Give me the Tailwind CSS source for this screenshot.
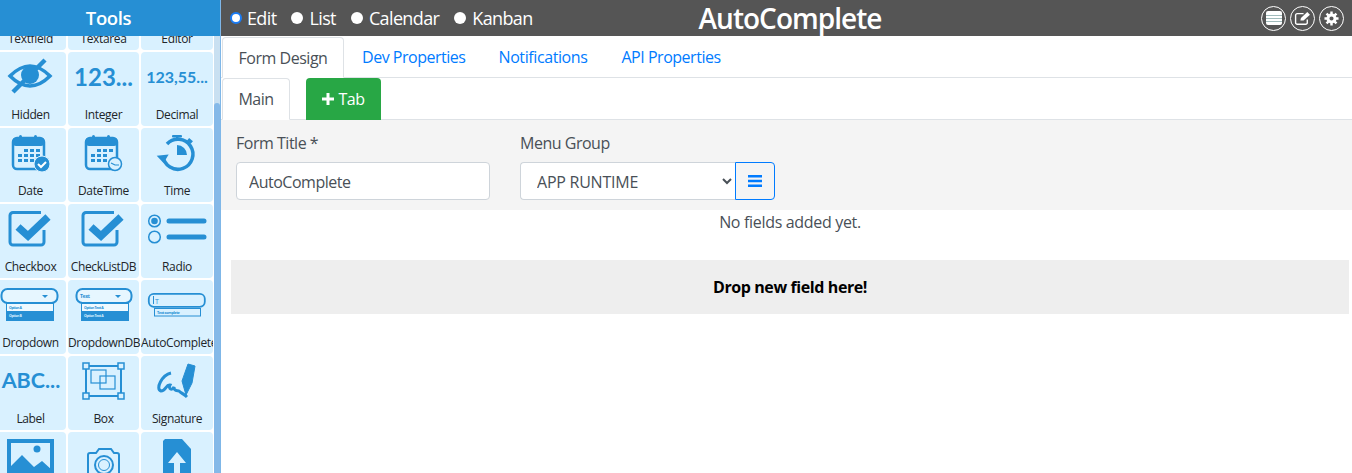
<!DOCTYPE html>
<html lang="en"><head><meta charset="utf-8"><title>AutoComplete</title>
<script src="https://cdn.jsdelivr.net/npm/@tailwindcss/browser@4"></script></head>
<body class="h-[473px] w-[1352px] overflow-hidden bg-white font-['Open_Sans',sans-serif] text-[#495057]">
<div class="flex h-[473px]">
<aside class="flex h-full w-[221px] shrink-0 flex-col border-r border-[#7fb7e8]">
<div class="relative z-10 h-9 bg-[#268fd4] pr-[3px] text-center text-[18.5px] leading-9 font-semibold tracking-[-0.02em] text-white">Tools</div>
<div class="flex min-h-0 flex-1">
<div class="min-w-0 flex-1 overflow-hidden">
<div class="-mt-[60px] -ml-[5px] grid w-[219px] grid-cols-[71px_71px_72px] gap-[2px] text-center text-[12px] tracking-[-0.03em] text-[#212529]">

<div class="h-[74px] rounded bg-[#d9f1ff]"><div class="h-[55px]"></div><div class="whitespace-nowrap leading-4">Textfield</div></div>
<div class="h-[74px] rounded bg-[#d9f1ff]"><div class="h-[55px]"></div><div class="whitespace-nowrap leading-4">Textarea</div></div>
<div class="h-[74px] rounded bg-[#d9f1ff]"><div class="h-[55px]"></div><div class="whitespace-nowrap leading-4">Editor</div></div>

<div class="h-[74px] rounded bg-[#d9f1ff]"><svg viewBox="0 0 71 54" class="h-[54px] w-full" fill="none" stroke="#268fd4"><path d="M15 24Q35 4 55 24Q35 44 15 24Z" stroke-width="3.5"/><circle cx="35" cy="23" r="9" fill="#268fd4" stroke="none"/><path d="M50 8L18 40" stroke-width="4.5"/></svg><div class="mt-[1px] whitespace-nowrap leading-4">Hidden</div></div>
<div class="h-[74px] overflow-hidden rounded bg-[#d9f1ff]"><div class="flex h-[55px] items-center justify-center pb-[5px] text-[24px] font-bold tracking-normal text-[#268fd4] font-['Lato',sans-serif]">123...</div><div class="whitespace-nowrap leading-4">Integer</div></div>
<div class="h-[74px] overflow-hidden rounded bg-[#d9f1ff]"><div class="flex h-[55px] items-center justify-center pb-[5px] text-[16px] font-bold tracking-normal text-[#268fd4] font-['Lato',sans-serif]">123,55...</div><div class="whitespace-nowrap leading-4">Decimal</div></div>

<div class="h-[74px] rounded bg-[#d9f1ff]"><svg viewBox="0 0 71 54" class="h-[54px] w-full" fill="#268fd4"><rect x="18" y="10" width="31" height="31" rx="4" fill="none" stroke="#268fd4" stroke-width="2.5"/><rect x="18" y="10" width="31" height="8" rx="3"/><rect x="24" y="7" width="3" height="7" rx="1.5"/><rect x="39" y="7" width="3" height="7" rx="1.5"/><path d="M29 21h4v3h-4zM35 21h4v3h-4zM41 21h4v3h-4zM23 26h4v3h-4zM29 26h4v3h-4zM35 26h4v3h-4zM41 26h4v3h-4zM23 31h4v3h-4zM29 31h4v3h-4zM35 31h4v3h-4z"/><circle cx="47" cy="36" r="8" stroke="#d9f1ff" stroke-width="1"/><path d="M43 36l3 3 5-5" fill="none" stroke="#fff" stroke-width="2"/></svg><div class="mt-[1px] whitespace-nowrap leading-4">Date</div></div>
<div class="h-[74px] rounded bg-[#d9f1ff]"><svg viewBox="0 0 71 54" class="h-[54px] w-full" fill="#268fd4"><rect x="18" y="10" width="31" height="31" rx="4" fill="none" stroke="#268fd4" stroke-width="2.5"/><rect x="18" y="10" width="31" height="8" rx="3"/><rect x="24" y="7" width="3" height="7" rx="1.5"/><rect x="39" y="7" width="3" height="7" rx="1.5"/><path d="M29 21h4v3h-4zM35 21h4v3h-4zM41 21h4v3h-4zM23 26h4v3h-4zM29 26h4v3h-4zM35 26h4v3h-4zM23 31h4v3h-4zM29 31h4v3h-4zM35 31h4v3h-4z"/><circle cx="47" cy="36" r="6.5" fill="#d9f1ff" stroke="#268fd4" stroke-width="1.5"/><path d="M43 35l4 2 4 0" fill="none" stroke="#268fd4" stroke-width="1.2"/></svg><div class="mt-[1px] whitespace-nowrap leading-4">DateTime</div></div>
<div class="h-[74px] rounded bg-[#d9f1ff]"><svg viewBox="0 0 72 54" class="h-[54px] w-full" fill="#268fd4"><path d="M26 16A15 15 0 1 1 22 28" fill="none" stroke="#268fd4" stroke-width="3.5"/><path d="M16 27h12l-6 8z" transform="rotate(-6 22 30)"/><rect x="31" y="7" width="10" height="2.5" rx="1"/><rect x="35" y="8" width="2.5" height="5"/><rect x="47" y="11" width="5" height="3.5" transform="rotate(40 49 12)"/><path d="M36 17A10 10 0 0 1 46 27H36Z"/></svg><div class="mt-[1px] whitespace-nowrap leading-4">Time</div></div>

<div class="h-[74px] rounded bg-[#d9f1ff]"><svg viewBox="0 0 71 54" class="h-[54px] w-full" fill="none" stroke="#268fd4"><path d="M46 8.500H18a3 3 0 0 0-3 3V38a3 3 0 0 0 3 3H46a3 3 0 0 0 3-3V26" stroke-width="3"/><path d="M23 23l10 9 20-19" stroke-width="7.500"/></svg><div class="mt-[1px] whitespace-nowrap leading-4">Checkbox</div></div>
<div class="h-[74px] rounded bg-[#d9f1ff]"><svg viewBox="0 0 71 54" class="h-[54px] w-full" fill="none" stroke="#268fd4"><path d="M46 8.500H18a3 3 0 0 0-3 3V38a3 3 0 0 0 3 3H46a3 3 0 0 0 3-3V26" stroke-width="3"/><path d="M23 23l10 9 20-19" stroke-width="7.500"/></svg><div class="mt-[1px] whitespace-nowrap leading-4">CheckListDB</div></div>
<div class="h-[74px] rounded bg-[#d9f1ff]"><svg viewBox="0 0 72 54" class="h-[54px] w-full" fill="none" stroke="#268fd4"><circle cx="13.500" cy="17" r="5.800" stroke-width="1.500"/><circle cx="13.500" cy="17" r="3.300" fill="#268fd4" stroke="none"/><circle cx="13.500" cy="33" r="5.800" stroke-width="1.500"/><path d="M28 17h35M28 33h35" stroke-width="5" stroke-linecap="round"/></svg><div class="mt-[1px] whitespace-nowrap leading-4">Radio</div></div>

<div class="h-[74px] rounded bg-[#d9f1ff]"><svg viewBox="0 0 71 54" class="h-[54px] w-full" font-family="Open Sans" font-size="3.500" font-weight="700" fill="#268fd4"><rect x="6.500" y="9" width="56" height="14" rx="6" fill="#e6f6ff" stroke="#268fd4" stroke-width="2"/><path d="M47 15h6l-3 3z"/><rect x="11.500" y="23.500" width="47" height="8" fill="#eef9ff" stroke="#268fd4"/><text x="14" y="29">Option A</text><rect x="11" y="31" width="48" height="10"/><text x="14" y="37" fill="#d9f1ff">Option B</text></svg><div class="mt-[1px] whitespace-nowrap leading-4">Dropdown</div></div>
<div class="h-[74px] rounded bg-[#d9f1ff]"><svg viewBox="0 0 71 54" class="h-[54px] w-full" font-family="Open Sans" font-size="3.500" font-weight="700" fill="#268fd4"><rect x="8.500" y="9" width="55" height="14" rx="6" fill="#e6f6ff" stroke="#268fd4" stroke-width="2"/><text x="12" y="18" font-size="5">Text</text><path d="M47 15h6l-3 3z"/><rect x="13.500" y="23.500" width="47" height="8" fill="#eef9ff" stroke="#268fd4"/><text x="16" y="29">Option Text A</text><rect x="13" y="31" width="48" height="10"/><text x="16" y="37" fill="#d9f1ff">Option Text A</text></svg><div class="mt-[1px] whitespace-nowrap leading-4">DropdownDB</div></div>
<div class="h-[74px] overflow-hidden rounded bg-[#d9f1ff]"><svg viewBox="0 0 72 54" class="h-[54px] w-full" font-family="Open Sans" fill="#268fd4"><rect x="7.800" y="13.800" width="56" height="13" rx="5" fill="none" stroke="#268fd4" stroke-width="1.800"/><path d="M12.500 16v8" stroke="#268fd4"/><text x="14" y="23.500" font-size="7">T</text><rect x="13.500" y="28.500" width="46" height="7.500" fill="none" stroke="#268fd4"/><text x="16" y="34" font-size="3.800" font-weight="700">Text complete</text></svg><div class="mt-[1px] whitespace-nowrap text-left leading-4">AutoComplete</div></div>

<div class="h-[74px] overflow-hidden rounded bg-[#d9f1ff]"><div class="flex h-[55px] items-center justify-center pb-[7px] pl-[1px] text-[21.5px] font-bold tracking-normal text-[#268fd4] font-['Lato',sans-serif]">ABC...</div><div class="whitespace-nowrap leading-4">Label</div></div>
<div class="h-[74px] rounded bg-[#d9f1ff]"><svg viewBox="0 0 71 54" class="h-[54px] w-full" fill="#d9f1ff" stroke="#268fd4"><rect x="18" y="10" width="35" height="30" fill="none" stroke-width="2"/><rect x="23" y="14" width="15" height="13" fill="none" stroke-width="1.200"/><rect x="32" y="20" width="15" height="13" fill="none" stroke-width="1.200"/><rect x="15" y="7" width="6" height="6" stroke-width="1.500"/><rect x="50" y="7" width="6" height="6" stroke-width="1.500"/><rect x="15" y="37" width="6" height="6" stroke-width="1.500"/><rect x="50" y="37" width="6" height="6" stroke-width="1.500"/></svg><div class="mt-[1px] whitespace-nowrap leading-4">Box</div></div>
<div class="h-[74px] rounded bg-[#d9f1ff]"><svg viewBox="0 0 72 54" class="h-[54px] w-full" fill="none" stroke="#268fd4"><path d="M30 17C21 19 14 33 20 35C25 35 25 28 29 29C27 33 31 35 33 31C33 36 37 34 38 35C40 37 43 38 46 41" stroke-width="3"/><path d="M47 8L54 10L51 27L45 39L41 25Z" fill="#268fd4" stroke-width="1"/></svg><div class="mt-[1px] whitespace-nowrap leading-4">Signature</div></div>

<div class="h-[74px] rounded bg-[#d9f1ff]"><svg viewBox="0 0 71 54" class="h-[54px] w-full" fill="#268fd4"><rect x="14" y="9" width="43" height="41" fill="none" stroke="#268fd4" stroke-width="4"/><path d="M14 50V36L27 23L39 35L47 29L57 38V50Z"/><circle cx="42" cy="17" r="3.500"/></svg></div>
<div class="h-[74px] rounded bg-[#d9f1ff]"><svg viewBox="0 0 71 54" class="h-[54px] w-full" fill="none" stroke="#268fd4" stroke-width="2"><path d="M22 21h6l3-4h12l3 4h3a2 2 0 0 1 2 2v28H20V23a2 2 0 0 1 2-2Z"/><circle cx="36" cy="33" r="9"/><circle cx="36" cy="33" r="5.500" stroke-width="1"/></svg></div>
<div class="h-[74px] rounded bg-[#d9f1ff]"><svg viewBox="0 0 72 54" class="h-[54px] w-full" fill="#268fd4"><path d="M24 7H41L50 17V54H22V9Z"/><path d="M36 20L45 31H39V50H33V31H27Z" fill="#d9f1ff"/></svg></div>
</div>
</div>
<div class="relative w-[6px] shrink-0 bg-[#c9e0f1]"><div class="absolute inset-x-0 top-[67px] bottom-0 rounded-t-full bg-[#85b9e8]"></div></div>
</div>
</aside>
<main class="min-w-0 flex-1">
<header class="flex h-9 items-center bg-[#555] pl-[9px] pr-2 text-white">
<div class="flex w-[0] flex-1 items-center gap-[15px] whitespace-nowrap text-[18px] tracking-[-0.035em]">
<label class="flex items-center gap-[5px]"><input type="radio" name="v" checked class="size-3 appearance-none rounded-full border-[2px] border-[#1a7cf5] bg-white"><span>Edit</span></label>
<label class="flex items-center gap-[6px]"><input type="radio" name="v" class="size-3 appearance-none rounded-full bg-white"><span>List</span></label>
<label class="flex items-center gap-[6px]"><input type="radio" name="v" class="size-3 appearance-none rounded-full bg-white"><span>Calendar</span></label>
<label class="flex items-center gap-[6px]"><input type="radio" name="v" class="size-3 appearance-none rounded-full bg-white"><span>Kanban</span></label>
</div>
<h1 class="pl-[6px] text-[28px] font-semibold tracking-[-0.035em] whitespace-nowrap">AutoComplete</h1>
<div class="flex w-[0] flex-1 items-center justify-end gap-1">
<button class="flex size-[25px] items-center justify-center rounded-full border border-white"><svg viewBox="0 0 16 14" class="w-[16px]" fill="#fff"><rect width="16" height="14" rx="2"/><path d="M0 4.500h16M0 7.500h16M0 10.500h16" stroke="#8aa" stroke-width=".8"/></svg></button>
<button class="flex size-[25px] items-center justify-center rounded-full border border-white"><svg viewBox="0 0 16 14" class="w-[17px]" fill="none" stroke="#fff"><path d="M9 2.500H3a1.500 1.500 0 0 0-1.500 1.500v7A1.500 1.500 0 0 0 3 12.500h8a1.500 1.500 0 0 0 1.500-1.500V8" stroke-width="1.300"/><path d="M6 9l.5-2.500L12.500 1 15 3.500 9 9Z" fill="#fff" stroke="none"/></svg></button>
<button class="flex size-[25px] items-center justify-center rounded-full border border-white"><svg viewBox="0 0 16 16" class="w-[15px]" fill="none" stroke="#fff"><circle cx="8" cy="8" r="3.800" stroke-width="3.200"/><path d="M8 .5v3M8 12.500v3M.5 8h3M12.500 8h3M2.700 2.700l2 2M11.300 11.300l2 2M2.700 13.300l2-2M11.300 4.700l2-2" stroke-width="2.600"/></svg></button>
</div>
</header>
<nav class="flex h-[42px] items-end border-b border-[#dee2e6] pl-[1px] text-[16px] tracking-[-0.03em]">
<a class="-mb-px flex h-[41px] w-[122px] items-center justify-center rounded-t border border-b-white border-[#dee2e6] bg-white">Form Design</a>
<a class="flex h-10 items-center pl-[18px] text-[#007bff]">Dev Properties</a>
<a class="flex h-10 items-center pl-[33px] tracking-[-0.025em] text-[#007bff]">Notifications</a>
<a class="flex h-10 items-center pl-[34px] text-[#007bff]">API Properties</a>
</nav>
<nav class="flex h-[42px] items-end gap-4 border-b border-[#dee2e6] pl-[1px] text-[16px] tracking-[-0.03em]">
<a class="-mb-px flex h-[42px] w-[68px] items-center justify-center rounded-t border border-b-white border-[#dee2e6] bg-white">Main</a>
<button class="-mb-px flex h-[42px] w-[75px] items-center justify-center gap-[4px] rounded-t bg-[#28a745] text-white"><svg viewBox="0 0 12 12" class="size-3" fill="#fff"><path d="M4.500 0h3v4.500H12v3H7.500V12h-3V7.500H0v-3h4.500z"/></svg>Tab</button>
</nav>
<section class="flex h-[90px] gap-[30px] bg-[#f4f4f4] pt-[10px] pl-[15px] text-[16px] tracking-[-0.03em]">
<div class="w-[254px]"><label class="block h-6 pt-[1px] leading-6">Form Title *</label><input value="AutoComplete" class="mt-2 h-[38px] w-full rounded border border-[#ced4da] bg-white px-3 pt-[2px] text-[#495057] outline-none"></div>
<div><label class="block h-6 pt-[1px] leading-6">Menu Group</label><div class="mt-2 flex"><select class="h-[38px] w-[215px] rounded-l border border-r-0 border-[#ced4da] bg-white px-3 pt-[2px] tracking-[-0.015em] text-[#495057] outline-none"><option>APP RUNTIME</option></select><button class="flex h-[38px] w-10 items-center justify-center rounded-r border border-[#007bff]"><svg viewBox="0 0 14 12" class="w-[14px]" fill="#007bff"><path d="M0 0h14v2.500H0zM0 4.700h14v2.500H0zM0 9.400h14v2.500H0z"/></svg></button></div></div>
</section>
<div class="pr-[3px] pl-[10px]">
<p class="h-[50px] text-center text-[16px] leading-6 tracking-[-0.02em] text-[#495057]">No fields added yet.</p>
<div class="flex h-[54px] items-center justify-center bg-[#eee] text-[16px] font-bold tracking-[-0.025em] text-black">Drop new field here!</div>
</div>
</main>
</div>
</body></html>
